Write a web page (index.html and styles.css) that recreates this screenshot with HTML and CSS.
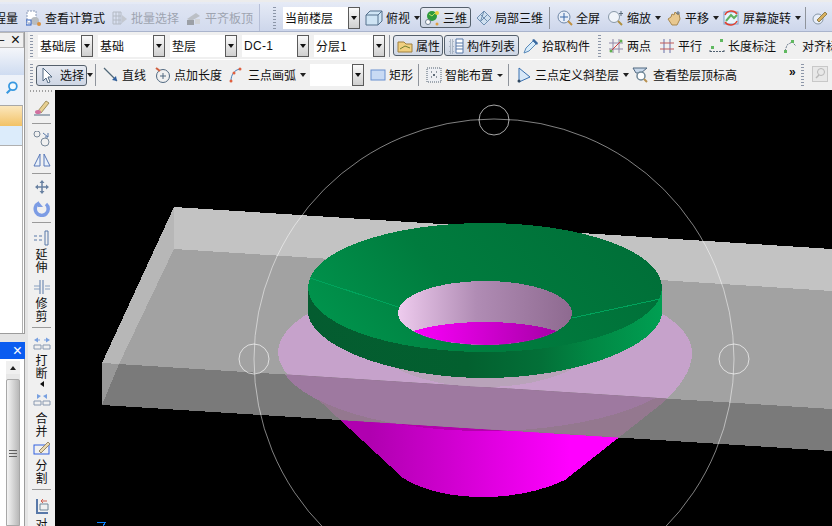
FILE: index.html
```html
<!DOCTYPE html>
<html lang="zh">
<head>
<meta charset="utf-8">
<title>三维视图</title>
<link rel="stylesheet" href="styles.css">
</head>
<body>
<div class="app">
  <header class="row1">
    <div class="group1">
      <span class="clipt">程量</span>
      <span class="tool m8"><svg class="i" viewBox="0 0 16 16"><rect x="1" y="1" width="9" height="12" fill="#fff" stroke="#8a9ab8" stroke-dasharray="2 1"/><circle cx="9" cy="11" r="4" fill="#b8bcc0"/><rect x="0" y="10" width="5" height="5" fill="none" stroke="#3060c0"/><circle cx="13" cy="14" r="2" fill="#d89040"/></svg>查看计算式</span>
      <span class="tool off m7"><svg class="i" viewBox="0 0 16 16"><path d="M1 2h8v12H1zM1 6h8M1 10h8M4 2v12M7 2v12" fill="none" stroke="#b4bac4"/><path d="M10 5l5 4-5 4z" fill="#c4c8d0"/></svg>批量选择</span>
      <span class="tool off m7"><svg class="i" viewBox="0 0 16 16"><path d="M1 9l9-6 4 3-9 5z" fill="#bcc0c6"/><path d="M1 10h7v5H1z" fill="#9ca0a6"/><path d="M9 9h5v5H9z" fill="#d2d4d8"/></svg>平齐板顶</span>
    </div>
    <div class="grip gripv"></div>
    <span class="sel s1"><span class="val">当前楼层</span><span class="drop"></span></span>
    <span class="tool m5"><svg class="i w18" viewBox="0 0 18 16"><path d="M1 5l4-4h12v10l-4 4H1z" fill="#cfe4f4" stroke="#55708c"/><path d="M1 5h12v10M13 5l4-4" fill="none" stroke="#55708c"/></svg>俯视</span>
    <span class="arr m4"></span>
    <span class="tool press p3d"><svg class="i" viewBox="0 0 16 16"><path d="M3 14l4-4" stroke="#607080" stroke-width="2"/><circle cx="8" cy="6" r="5" fill="#2f9a3c"/><path d="M5 4l3 2 3-3" stroke="#b8e060" fill="none"/><circle cx="13" cy="3" r="2" fill="#e8d040"/><circle cx="4" cy="12" r="2.500" fill="#fff" stroke="#708090"/><circle cx="13" cy="14" r="1.500" fill="#e0a040"/></svg>三维</span>
    <span class="tool m5"><svg class="i" viewBox="0 0 16 16"><path d="M1 8l7-7 7 7-7 7z" fill="#cfe0f0" stroke="#6e8eb0"/><path d="M4.500 4.500l7 7M8 1l-3.500 10.500M11.500 4.500l-7 7" stroke="#6e8eb0" fill="none"/></svg>局部三维</span>
    <i class="sep m6"></i>
    <span class="tool m7"><svg class="i" viewBox="0 0 16 16"><circle cx="7" cy="7" r="6" fill="#e8eef8" stroke="#7088a8"/><path d="M7 3v8M3 7h8" stroke="#3868a8"/><path d="M11 11l4 4" stroke="#c09040" stroke-width="2"/></svg>全屏</span>
    <span class="tool m8"><svg class="i" viewBox="0 0 16 16"><circle cx="6" cy="7" r="5.500" fill="#f0f4fa" stroke="#8898a8"/><path d="M10 11l4 4" stroke="#b09040" stroke-width="2"/><path d="M13 1v5M11 3.500h4" stroke="#5a6a7a"/></svg>缩放</span>
    <span class="arr m4"></span>
    <span class="tool m5"><svg class="i" viewBox="0 0 16 16"><path d="M2 9l3-2 1-3 2 1 1-3 2 2 2 0 1 5-3 6H6z" fill="#e8c890" stroke="#a88850"/><path d="M12 1v4M10 3h4" stroke="#607080"/></svg>平移</span>
    <span class="arr m4"></span>
    <span class="tool m3"><svg class="i w18" viewBox="0 0 18 16"><rect x="2" y="2" width="14" height="12" fill="#e8f4fc" stroke="#78a0c8"/><path d="M4 11l5-6 3 3 3-3" fill="none" stroke="#60b060" stroke-width="2"/><path d="M3 5a7 7 0 0 1 12-1M15 11a7 7 0 0 1-12 1" fill="none" stroke="#e04030" stroke-width="1.500"/></svg>屏幕旋转</span>
    <span class="arr m4"></span>
    <i class="sep m4"></i>
    <span class="tool m6"><svg class="i" viewBox="0 0 16 16"><circle cx="6" cy="9" r="5" fill="#e8eef8" stroke="#8898a8"/><path d="M5 10l8-8 2 2-8 8z" fill="#d8b060" stroke="#908050"/></svg></span>
  </header>

  <div class="main">
    <aside class="side">
      <div class="panel">
        <div class="phead"><span class="dash">–</span><span class="close">×</span></div>
        <div class="pgrad"></div>
        <div class="psearch"><svg class="mag" viewBox="0 0 16 16"><circle cx="9" cy="6" r="4.500" fill="#f4fafe" stroke="#3898e0" stroke-width="2"/><path d="M6 10l-4 4" stroke="#3898e0" stroke-width="2.500"/></svg></div>
        <div class="pbody">
          <div class="rowsel"></div>
          <div class="rowpale"></div>
        </div>
      </div>
      <div class="pgap"></div>
      <div class="ptitle"><span class="close w">×</span></div>
      <div class="plist">
        <div class="scroll">
          <div class="sup"></div>
          <div class="sthumb"><span class="sgrip"></span></div>
        </div>
      </div>
    </aside>

    <div class="rest">
      <div class="row2">
        <div class="grip gripv g2"></div>
        <span class="sel s2"><span class="val">基础层</span><span class="drop"></span></span>
        <span class="sel s3"><span class="val">基础</span><span class="drop"></span></span>
        <span class="sel s3"><span class="val">垫层</span><span class="drop"></span></span>
        <span class="sel s3"><span class="val lat">DC-1</span><span class="drop"></span></span>
        <span class="sel s5"><span class="val">分层1</span><span class="drop"></span></span>
        <i class="sep m4"></i>
        <span class="tool press pa m3"><svg class="i" viewBox="0 0 16 16"><path d="M1 4h6l2 2h6v8H1z" fill="#f0d080" stroke="#a08040"/><path d="M3 11l5-3 5 2" stroke="#708030" fill="none"/></svg>属性</span>
        <span class="tool press pb m1"><svg class="i" viewBox="0 0 16 16"><path d="M2 2h3v3H2zM2 7h3v3H2zM2 12h3v3H2z" fill="none" stroke="#8090a0" stroke-dasharray="1 1"/><path d="M8 1h7v14H8zM8 5h7M8 8h7M8 11h7" fill="#fff" stroke="#5878a8"/></svg>构件列表</span>
        <span class="tool m4"><svg class="i" viewBox="0 0 16 16"><path d="M1 15l2-5 7-7 3 3-7 7z" fill="#d8ecfa" stroke="#5888b8"/><path d="M9 2l2-1 4 4-1 2z" fill="#3868a0"/></svg>拾取构件</span>
        <div class="grip gripv g3"></div>
        <span class="tool m7"><svg class="i" viewBox="0 0 16 16"><path d="M5 1v14M11 1v14M1 5h14M1 11h14" stroke="#9088a8" fill="none"/><path d="M2 14L14 2" stroke="#d04040"/><circle cx="3" cy="13" r="1.500" fill="#60b050"/><circle cx="13" cy="3" r="1.500" fill="#60b050"/></svg>两点</span>
        <span class="tool m8"><svg class="i" viewBox="0 0 16 16"><path d="M5 1v14M11 1v14" stroke="#6870a8" fill="none"/><path d="M1 5h14M1 11h14" stroke="#c05858" fill="none"/></svg>平行</span>
        <span class="tool m7"><svg class="i" viewBox="0 0 16 16"><path d="M1 12v3M15 12v3M1 13.500h14" stroke="#506070" stroke-dasharray="2 1" fill="none"/><rect x="2" y="8" width="3" height="3" fill="#60b860"/><rect x="11" y="1" width="3" height="3" fill="#60b860"/></svg>长度标注</span>
        <span class="tool m7"><svg class="i" viewBox="0 0 16 16"><path d="M2 13l2-6 5-3 4 4" stroke="#708090" stroke-dasharray="2 1" fill="none"/><rect x="1" y="12" width="3" height="3" fill="#60b860"/><rect x="8" y="2" width="3" height="3" fill="#60b860"/></svg>对齐标注</span>
      </div>
      <div class="row3">
        <div class="grip gripv g4"></div>
        <span class="tool press psel"><svg class="i" viewBox="0 0 16 16"><path d="M3 1l9 9-4 0 2 5-2 1-2-5-3 3z" fill="#fff" stroke="#506880"/></svg>选择</span>
        <span class="arr m0"></span>
        <i class="sep m2"></i>
        <span class="tool m7"><svg class="i" viewBox="0 0 16 16"><path d="M1 1l13 13" stroke="#506878" stroke-width="1.200"/><path d="M14 14l-5-1 4-4z" fill="#3060a0"/></svg>直线</span>
        <span class="tool m9"><svg class="i" viewBox="0 0 16 16"><circle cx="8" cy="9" r="6.500" fill="none" stroke="#506880"/><path d="M8 6v6M5 9h6" stroke="#506880"/><path d="M1 1l4 3" stroke="#d06040" stroke-width="2"/></svg>点加长度</span>
        <span class="tool m7"><svg class="i w13" viewBox="0 0 13 16"><path d="M2 14C2 8 5 3 11 2" fill="none" stroke="#4880b8"/><circle cx="2" cy="14" r="1.500" fill="#e06040"/><circle cx="11" cy="2" r="1.500" fill="#e06040"/><circle cx="5" cy="6" r="1.500" fill="#e06040"/></svg><span class="ml6">三点画弧</span></span>
        <span class="arr m4"></span>
        <span class="sel s4 m4"><span class="val"></span><span class="drop"></span></span>
        <span class="tool m6"><svg class="i" viewBox="0 0 16 16"><rect x="1" y="3" width="14" height="10" fill="#c8daf4" stroke="#6890d0"/></svg>矩形</span>
        <i class="sep m5"></i>
        <span class="tool m7"><svg class="i" viewBox="0 0 16 16"><rect x="1" y="1" width="14" height="14" fill="#eef0f4" stroke="#506070" stroke-dasharray="1 1"/><path d="M5 5h1M10 5h1M5 10h1M10 10h1M8 7v2M7 8h2" stroke="#304050"/></svg>智能布置</span>
        <span class="arr sm m4"></span>
        <i class="sep m5"></i>
        <span class="tool m8"><svg class="i w14" viewBox="0 0 14 16"><path d="M2 1l11 9-11 5z" fill="#d8e8f8" stroke="#3870b0"/><circle cx="2" cy="14" r="1.500" fill="#304860"/></svg>三点定义斜垫层</span>
        <span class="arr m4"></span>
        <span class="tool m3"><svg class="i" viewBox="0 0 16 16"><path d="M1 1h14l-6 5H4z" fill="#c8d8ea" stroke="#506880"/><circle cx="9" cy="9" r="4" fill="#fff" stroke="#708898" stroke-width="1.500"/><path d="M12 12l3 3" stroke="#b89050" stroke-width="2"/></svg><span class="ml2">查看垫层顶标高</span></span>
        <span class="more">»</span>
        <div class="grip gripv g5"></div>
        <span class="ghost"><svg class="i" viewBox="0 0 16 16"><rect x="0.500" y="0.500" width="15" height="15" fill="#e8e8e8" stroke="#c8c8c8"/><circle cx="9" cy="6" r="3.500" fill="none" stroke="#b8b8b8"/><path d="M7 9l-3 3" stroke="#b8b8b8" stroke-width="1.500"/></svg></span>
      </div>

      <div class="work">
        <nav class="vbar">
          <div class="grip griph"></div>
          <svg class="vi first" viewBox="0 0 18 16"><path d="M5 11l8-10 3 2-8 10z" fill="#e8d090" stroke="#a09060"/><ellipse cx="5" cy="12" rx="3" ry="2" fill="#d070a0"/><path d="M1 15h16" stroke="#506880"/></svg>
          <i class="hr r1"></i>
          <svg class="vi" viewBox="0 0 18 16"><circle cx="4" cy="3" r="3" fill="none" stroke="#788898"/><circle cx="12" cy="11" r="4" fill="none" stroke="#788898"/><path d="M10 2l5 4M15 2v4h-3" fill="none" stroke="#5878a8"/></svg>
          <svg class="vi g4b" viewBox="0 0 18 16"><path d="M7 2v12H1zM11 2v12h6z" fill="#e8f0fa" stroke="#5878b8"/></svg>
          <i class="hr r2"></i>
          <svg class="vi" viewBox="0 0 18 16"><path d="M9 1l2.500 3h-5zM9 15l2.500-3h-5zM2 8l3-2.500v5zM16 8l-3-2.500v5z" fill="#6880a0"/><path d="M9 3v10M4 8h10" stroke="#6880a0" stroke-width="1.500"/></svg>
          <svg class="vi g6" viewBox="0 0 18 16"><path d="M6 2a6.500 6.500 0 1 0 7 1" fill="none" stroke="#7c9ce4" stroke-width="3.500"/><path d="M5 0v6h5z" fill="#7c9ce4"/></svg>
          <i class="hr r3"></i>
          <svg class="vi" viewBox="0 0 18 16"><path d="M12 1h3v14h-3z" fill="none" stroke="#5878a8"/><path d="M1 6h3M6 6h3M1 10h3M6 10h3" stroke="#5878a8"/></svg>
          <span class="vt">延<br>伸</span>
          <svg class="vi g7" viewBox="0 0 18 16"><path d="M7 1v14M10 1v14" stroke="#5878a8" fill="none"/><path d="M1 7h6M1 10h6M12 7h5M12 10h5" stroke="#88a0c0" fill="none"/></svg>
          <span class="vt">修<br>剪</span>
          <i class="hr r4"></i>
          <svg class="vi" viewBox="0 0 18 16"><path d="M1 4l4-2.500v5zM17 4l-4-2.500v5z" fill="#78a0e0"/><path d="M4 4h3M11 4h3" stroke="#78a0e0"/><path d="M1 9h7v4H1zM10 9h7v4h-7z" fill="none" stroke="#8898b0"/></svg>
          <span class="vt">打<br>断</span>
          <span class="larr"></span>
          <svg class="vi g8" viewBox="0 0 18 16"><path d="M8 3L4 1v5zM10 3l4-2v5z" fill="#78a0e0"/><path d="M1 8h7v4H1zM10 8h7v4h-7z" fill="none" stroke="#8898b0"/></svg>
          <span class="vt t2">合<br>并</span>
          <svg class="vi g9" viewBox="0 0 18 16"><rect x="1" y="5" width="15" height="9" fill="none" stroke="#3060e0"/><path d="M6 11L15 2l2 2-9 9z" fill="#e8d8b0" stroke="#988868"/></svg>
          <span class="vt t2">分<br>割</span>
          <i class="hr r5"></i>
          <svg class="vi" viewBox="0 0 18 16"><path d="M4 1v14h11" fill="none" stroke="#5878a8" stroke-width="2"/><path d="M7 6h8v6H7z" fill="none" stroke="#708898"/><path d="M14 3H8l2-2M8 3l2 2" fill="none" stroke="#d06050"/></svg>
          <span class="vt t3">对</span>
        </nav>
        <svg class="scene" viewBox="55 90 777 436" shape-rendering="crispEdges">
          <defs>
            <linearGradient id="ctop" gradientUnits="userSpaceOnUse" x1="370" y1="0" x2="570" y2="0"><stop offset="0" stop-color="#b000b0"/><stop offset="1" stop-color="#ff00ff"/></linearGradient>
            <linearGradient id="chole" x1="0" y1="0" x2="1" y2="0"><stop offset="0.100" stop-color="#ff00ff"/><stop offset="0.850" stop-color="#a800a8"/></linearGradient>
            <linearGradient id="ghole" x1="0" y1="0" x2="1" y2="0"><stop offset="0" stop-color="#eecbee"/><stop offset="0.450" stop-color="#b08cb4"/><stop offset="1" stop-color="#8e6a90"/></linearGradient>
            <linearGradient id="gside" x1="0" y1="0" x2="1" y2="0"><stop offset="0" stop-color="#045c30"/><stop offset="0.450" stop-color="#03602f"/><stop offset="0.660" stop-color="#037038"/><stop offset="0.800" stop-color="#018844"/><stop offset="1" stop-color="#009f52"/></linearGradient>
            <linearGradient id="gtop" x1="0" y1="0.600" x2="1" y2="0.300"><stop offset="0" stop-color="#00934c"/><stop offset="0.400" stop-color="#007c3e"/><stop offset="1" stop-color="#006f38"/></linearGradient>
            <clipPath id="cfloor"><polygon points="174,249 832,291 832,409 102,363"/></clipPath>
            <clipPath id="cfront"><polygon points="102,363 832,409 832,451 102,405"/></clipPath>
            <clipPath id="chl"><ellipse cx="485" cy="313" rx="87" ry="32"/></clipPath>
            <path id="cone" d="M278 353A207 76 0 0 1 692 353C692 370 680 388 660 405L565 480C540 492 510 497 484 497C455 497 425 492 403 478L310 392C288 378 278 366 278 353Z"/>
          </defs>
          <rect x="55" y="90" width="777" height="436" fill="#000"/>
          <use href="#cone" fill="url(#ctop)"/>
          <ellipse cx="485" cy="355" rx="207" ry="76" fill="#b400ac"/>
          <polygon points="174,207 832,249 832,291 174,249" fill="#c3c3c3"/>
          <polygon points="174,249 832,291 832,409 102,363" fill="#a2a2a2"/>
          <polygon points="174,207 174,249 119,364 102,363" fill="#b7b7b7"/>
          <polygon points="102,363 832,409 832,451 102,405" fill="#7a7a7a"/>
          <polygon points="102,363 119,364 102,405" fill="#989898"/>
          <use href="#cone" fill="#c6a2cb" clip-path="url(#cfloor)"/>
          <use href="#cone" fill="#94788f" clip-path="url(#cfront)"/>
          <ellipse cx="485" cy="355" rx="207" ry="76" fill="#9e79a0" clip-path="url(#cfront)"/>
          <ellipse cx="485" cy="330" rx="120" ry="57" fill="#b9a3ba" clip-path="url(#cfloor)"/>
          <g shape-rendering="geometricPrecision">
            <circle cx="494" cy="359" r="240" fill="none" stroke="#fff" stroke-opacity="0.500"/>
            <circle cx="494" cy="120" r="15" fill="none" stroke="#fff" stroke-opacity="0.650"/>
            <circle cx="254" cy="359" r="15" fill="none" stroke="#fff" stroke-opacity="0.650"/>
            <circle cx="734" cy="359" r="15" fill="none" stroke="#fff" stroke-opacity="0.650"/>
          </g>
          <path d="M308 288V315C316 350 400 378 485 378C570 378 654 350 662 315V288Z" fill="url(#gside)"/>
          <ellipse cx="485" cy="287.500" rx="177" ry="64.500" fill="url(#gtop)"/>
          <path d="M310 278L398 307M660 299L572 318" stroke="#00a45c" fill="none"/>
          <ellipse cx="485" cy="313" rx="87" ry="32" fill="url(#ghole)"/>
          <ellipse cx="485" cy="352" rx="100" ry="30" fill="url(#chole)" clip-path="url(#chl)"/>
          <path d="M97 522H106L103 526" fill="none" stroke="#0a80ff"/>
        </svg>
      </div>
    </div>
  </div>
</div>
</body>
</html>
```
FILE: styles.css
```css
* { box-sizing: border-box; }
html, body { margin: 0; padding: 0; }
body {
  width: 832px;
  height: 526px;
  overflow: hidden;
  font: 12px/16px "Noto Sans CJK SC", "Liberation Sans", sans-serif;
  color: #101010;
  background: #f0f0f0;
}
.app { width: 832px; height: 526px; display: flex; flex-direction: column; overflow: hidden; }
.i { width: 16px; height: 16px; flex: none; margin-right: 3px; }
.w18 { width: 18px; }
.w14 { width: 14px; margin-right: 4px; }
.w13 { width: 13px; }
.ml6 { margin-left: 3px; }
.ml2 { margin-left: 2px; }
.tool { display: flex; align-items: center; flex: none; white-space: nowrap; }
.off { color: #9ea4b0; }
.m0 { margin-left: 0; }
.m1 { margin-left: 1px; }
.m2 { margin-left: 2px; }
.m3 { margin-left: 3px; }
.m4 { margin-left: 4px; }
.m5 { margin-left: 5px; }
.m6 { margin-left: 6px; }
.m7 { margin-left: 7px; }
.m8 { margin-left: 8px; }
.m9 { margin-left: 9px; }
.sep { flex: none; width: 1px; height: 22px; background: #8f949c; border-right: 0; }
.arr { flex: none; width: 0; height: 0; border: 3.5px solid transparent; border-top: 4px solid #202020; border-bottom: 0; }
.arr.sm { border-width: 3px 3px 0; }
.press {
  height: 21px;
  border: 1px solid #55606c;
  border-radius: 3px;
  background: linear-gradient(#e6eaf2, #ced6e4);
  padding-left: 3px;
}
.row1 {
  height: 32px;
  flex: none;
  display: flex;
  align-items: center;
  padding-top: 2px;
  background: linear-gradient(#e6ebf6, #cdd6eb);
  border-top: 2px solid #ececec;
  border-bottom: 1px solid #aab4cc;
  overflow: hidden;
}
.group1 {
  width: 260px;
  height: 100%;
  display: flex;
  align-items: center;
  flex: none;
  background: linear-gradient(#dfe5f3, #d3dbee);
  border-right: 1px solid #b7c0d8;
}
.clipt { margin-left: -6px; flex: none; }
.grip { flex: none; }
.gripv {
  width: 3px;
  height: 22px;
  margin-left: 13px;
  background: repeating-linear-gradient(#8c96a8 0 1px, transparent 1px 3px);
}
.sel { display: flex; align-items: center; flex: none; height: 22px; }
.val { flex: 1; height: 22px; background: #fff; padding-left: 2px; line-height: 22px; white-space: nowrap; overflow: hidden; }
.lat { font-family: "Liberation Sans", sans-serif; letter-spacing: 0.300px; }
.drop {
  flex: none;
  width: 12px;
  height: 22px;
  border: 1px solid #5a5a5a;
  background: linear-gradient(#fafafa, #cfcfcf);
  display: flex;
  align-items: center;
  justify-content: center;
}
.drop::after { content: ""; width: 0; height: 0; border: 3.500px solid transparent; border-top: 4px solid #101010; border-bottom: 0; }
.s1 { width: 77px; margin-left: 7px; }
.s2 { width: 55px; margin-left: 5px; }
.s3 { width: 67px; margin-left: 5px; }
.s4 { width: 54px; }
.s5 { width: 71px; margin-left: 5px; }
.p3d { width: 51px; margin-left: 0; }
.pa { width: 50px; }
.pb { width: 75px; }
.psel { width: 51px; margin-left: 3px; }
.psel .i { margin-right: 4px; }
.main { flex: 1; display: flex; min-height: 0; }
.side { width: 28px; flex: none; display: flex; flex-direction: column; background: #e4e4e4; }
.panel { height: 302px; width: 25px; flex: none; display: flex; flex-direction: column; border-right: 1px solid #9c9c9c; border-bottom: 1px solid #9c9c9c; background: #fff; }
.phead { height: 16px; flex: none; display: flex; align-items: center; justify-content: space-between; border: 1px solid #b8b8b8; border-left: 0; background: #f0f0f0; font: 13px/14px "Liberation Sans", sans-serif; overflow: hidden; }
.dash { margin-left: -3px; }
.close { margin-right: 3px; font: 16px/14px "Liberation Sans", sans-serif; }
.close.w { color: #fff; margin-right: 3px; }
.pgrad { height: 27px; flex: none; background: linear-gradient(#f4f6fa, #cfdcf1); }
.psearch { height: 30px; flex: none; display: flex; padding: 6px 0 0 5px; background: #eef2f9; }
.mag { width: 14px; height: 14px; }
.pbody { flex: 1; border-top: 1px solid #a8a8a8; width: 23px; border-right: 1px solid #b0b0b0; background: #fff; }
.rowsel { height: 20px; background: linear-gradient(#fbe7bd, #f2c266); }
.rowpale { height: 20px; background: #dcecfb; border-bottom: 1px solid #b0b0b0; }
.pgap { height: 8px; flex: none; }
.ptitle { height: 17px; width: 25px; flex: none; background: #0a5cf0; display: flex; justify-content: flex-end; align-items: center; }
.plist { flex: 1; width: 25px; background: #fff; padding: 2px 4px 0 6px; border-right: 1px solid #9c9c9c; }
.scroll { height: 100%; display: flex; flex-direction: column; background: #e8e8e8; }
.sup { height: 13px; flex: none; display: flex; justify-content: center; align-items: center; background: #f0f0f0; margin-bottom: 5px; }
.sup::after { content: ""; width: 0; height: 0; border: 3.500px solid transparent; border-bottom: 4px solid #202020; border-top: 0; }
.sthumb { flex: 1; border: 1px solid #a8a8a8; border-radius: 2px 2px 0 0; background: linear-gradient(90deg, #f4f4f4, #b8b8b8); padding-top: 70px; display: flex; justify-content: center; }
.sgrip { width: 8px; height: 7px; background: repeating-linear-gradient(#606060 0 1px, transparent 1px 3px); }
.rest { flex: 1; display: flex; flex-direction: column; min-width: 0; }
.row2 { height: 28px; flex: none; display: flex; align-items: center; overflow: hidden; background: #f0f0f0; border-bottom: 1px solid #fff; }
.row3 { height: 30px; flex: none; display: flex; align-items: center; overflow: hidden; background: #f0f0f0; }
.g2 { margin-left: 2px; }
.g3 { margin-left: 8px; }
.g4 { margin-left: 2px; }
.g5 { margin-left: 5px; }
.ghost { margin-left: 8px; }
.more { flex: none; margin-left: 52px; font: bold 12px/14px "Liberation Sans", sans-serif; margin-bottom: 6px; }
.work { flex: 1; display: flex; min-height: 0; }
.vbar { width: 27px; flex: none; display: flex; flex-direction: column; align-items: center; background: #f0f0f0; }
.griph { width: 24px; height: 2px; margin: 0; background: repeating-linear-gradient(90deg, #a0a0a0 0 1px, transparent 1px 3px); }
.vi { width: 18px; height: 16px; flex: none; margin-top: 0; }
.first { margin-top: 8px; }
.hr { display: block; flex: none; width: 19px; height: 1px; background: #9a9a9a; }
.r1 { margin: 7px 0 7px; }
.r2 { margin: 5px 0 5px; }
.r3 { margin: 5px 0 7px; }
.r4 { margin: 5px 0 8px; }
.r5 { margin: 5px 0 8px; }
.g4b { margin-top: 5px; }
.g6 { margin-top: 6px; }
.g7 { margin-top: 6px; }
.g8 { margin-top: 6px; }
.g9 { margin-top: 3px; }
.vt { font-size: 12px; line-height: 13px; text-align: center; margin-top: 1px; flex: none; }
.t2 { margin-top: 2px; }
.t3 { margin-top: 3px; }
.larr { flex: none; width: 0; height: 0; border: 3px solid transparent; border-right: 4px solid #101010; border-left: 0; margin: 2px 0 0; }
.scene { flex: 1; display: block; width: 777px; height: 436px; min-width: 0; }
```
